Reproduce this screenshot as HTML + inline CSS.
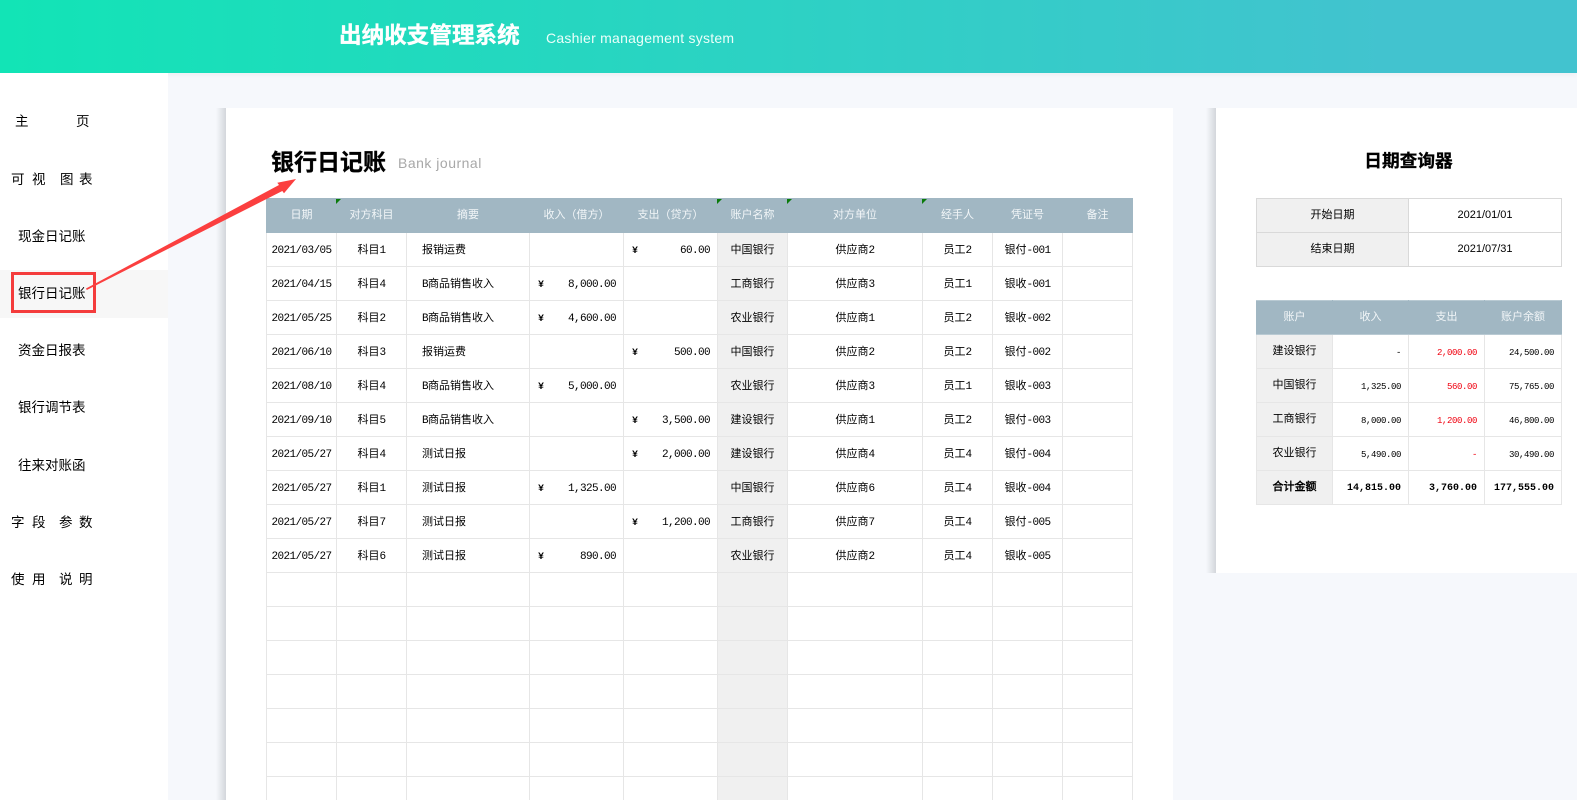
<!DOCTYPE html>
<html lang="zh"><head><meta charset="utf-8"><title>银行日记账</title>
<style>
*{box-sizing:border-box}
html,body{margin:0;padding:0;width:1577px;height:800px;overflow:hidden;background:#f6f8fc}
body{position:relative;font-family:"Liberation Sans","Noto Sans CJK SC",sans-serif;color:#000}
.abs{position:absolute}
#hd{left:0;top:0;width:1577px;height:73px;background:linear-gradient(90deg,#12e4b6 0%,#42c3cf 88%);box-shadow:0 2px 5px rgba(0,0,0,.04)}
#t1{left:339px;top:19px;font-size:22.6px;line-height:34px;font-weight:700;color:#fff;white-space:nowrap;-webkit-text-stroke:.35px #fff}
#t2{left:546px;top:27px;font-size:14px;line-height:22px;color:#eafffa;letter-spacing:.25px;white-space:nowrap}
#sb{left:0;top:73px;width:168px;height:727px;background:#fff}
#act{left:0;top:270px;width:168px;height:48px;background:#f7f7f7}
.m{position:absolute;font-family:"Liberation Sans","WenQuanYi Zen Hei",sans-serif;font-size:13.5px;line-height:18px;white-space:nowrap;color:#000;margin-top:1px}
#box{left:11px;top:272px;width:85px;height:41px;border:3px solid #f43c3c}
.card{background:#fff}
.sh{background:linear-gradient(90deg,#f6f8fc 0%,#e8ebef 40%,#d3d6db 100%)}
h1{position:absolute;margin:0;left:271px;top:144px;font-size:23px;line-height:32px;font-weight:700;white-space:nowrap;font-family:"Noto Sans CJK SC",sans-serif;-webkit-text-stroke:.35px #000}
#en{left:398px;top:153px;font-size:14px;line-height:20px;color:#a8a8a8;letter-spacing:.5px;white-space:nowrap}
table{border-collapse:collapse;table-layout:fixed;position:absolute}
td,th{padding:0;height:34px;line-height:14px;border:1px solid #e6e6e6;text-align:center;font-weight:400;font-size:11px;font-family:"Liberation Mono","WenQuanYi Zen Hei",monospace;white-space:nowrap;overflow:hidden}
th{background:#a1b7c3;color:#f2f6f8;border-color:#a1b7c3}
i{font-style:normal;font-size:11px;letter-spacing:-.6px}
#main td{padding-top:2px}
#main td.l{padding-left:15px}
#main td.d{font-size:11px;letter-spacing:-.6px;padding-top:3px}
.l{text-align:left}
.g{background:#f0f0f0}
#main td.a{font-size:11px;letter-spacing:-.6px;text-align:right;padding:3px 7px 0 8px;position:relative}
.a b{position:absolute;left:8px;top:12px;font-size:10px;font-weight:700;letter-spacing:0}
#main{left:266px;top:198px;width:866px}
.tri{position:absolute;top:199px;width:0;height:0;border-top:5px solid #0a7a0a;border-right:5px solid transparent}
#right h2{position:absolute;margin:0;left:1256px;width:305px;top:147px;text-align:center;font-size:17.7px;line-height:26px;font-weight:700;font-family:"Noto Sans CJK SC",sans-serif;-webkit-text-stroke:.3px #000}
#q{left:1256px;top:198px;width:305px}
#q td{border-color:#d9d9d9}
#q td.v{font-family:"Liberation Sans",sans-serif;font-size:11px;padding-bottom:1px}
#s{left:1256px;top:300px;width:305px}
#s th{border-color:#b9cad3;border-left-color:#a1b7c3;border-right-color:#a1b7c3}
#s th.x{border-left-color:#c3d1d9}
#s td.n{font-size:9px;letter-spacing:-.4px;text-align:right;padding:3px 7px 0 0}
#s td.r{color:#f0000f}
#s td.t{font-size:10px;font-weight:700;text-align:right;padding:3px 7px 0 0}
#s td.b{font-weight:700}
</style></head><body>
<div id="hd" class="abs"></div>
<div id="t1" class="abs">出纳收支管理系统</div>
<div id="t2" class="abs">Cashier management system</div>

<div id="sb" class="abs"></div>
<div id="act" class="abs"></div>
<span class="m" style="left:15px;top:112px">主</span><span class="m" style="left:76px;top:112px">页</span>
<span class="m" style="left:11px;top:170px">可</span><span class="m" style="left:32px;top:170px">视</span><span class="m" style="left:60px;top:170px">图</span><span class="m" style="left:79px;top:170px">表</span>
<span class="m" style="left:18px;top:227px">现金日记账</span>
<span class="m" style="left:18px;top:284px">银行日记账</span>
<span class="m" style="left:18px;top:341px">资金日报表</span>
<span class="m" style="left:18px;top:398px">银行调节表</span>
<span class="m" style="left:18px;top:456px">往来对账函</span>
<span class="m" style="left:11px;top:513px">字</span><span class="m" style="left:32px;top:513px">段</span><span class="m" style="left:59px;top:513px">参</span><span class="m" style="left:79px;top:513px">数</span>
<span class="m" style="left:11px;top:570px">使</span><span class="m" style="left:32px;top:570px">用</span><span class="m" style="left:59px;top:570px">说</span><span class="m" style="left:79px;top:570px">明</span>

<div class="abs sh" style="left:216px;top:108px;width:10px;height:692px"></div>
<div class="abs card" style="left:226px;top:108px;width:947px;height:692px"></div>
<h1>银行日记账</h1>
<div id="en" class="abs">Bank journal</div>

<table id="main">
<colgroup><col style="width:70px"><col style="width:70px"><col style="width:123px"><col style="width:94px"><col style="width:94px"><col style="width:70px"><col style="width:135px"><col style="width:70px"><col style="width:70px"><col style="width:70px"></colgroup>
<tr><th>日期</th><th>对方科目</th><th>摘要</th><th>收入（借方）</th><th>支出（贷方）</th><th>账户名称</th><th>对方单位</th><th>经手人</th><th>凭证号</th><th>备注</th></tr>
<tr><td class="d">2021/03/05</td><td>科目<i>1</i></td><td class="l">报销运费</td><td class="a"></td><td class="a"><b>¥</b>60.00</td><td class="g">中国银行</td><td>供应商<i>2</i></td><td>员工<i>2</i></td><td>银付<i>-001</i></td><td></td></tr>
<tr><td class="d">2021/04/15</td><td>科目<i>4</i></td><td class="l"><i>B</i>商品销售收入</td><td class="a"><b>¥</b>8,000.00</td><td class="a"></td><td class="g">工商银行</td><td>供应商<i>3</i></td><td>员工<i>1</i></td><td>银收<i>-001</i></td><td></td></tr>
<tr><td class="d">2021/05/25</td><td>科目<i>2</i></td><td class="l"><i>B</i>商品销售收入</td><td class="a"><b>¥</b>4,600.00</td><td class="a"></td><td class="g">农业银行</td><td>供应商<i>1</i></td><td>员工<i>2</i></td><td>银收<i>-002</i></td><td></td></tr>
<tr><td class="d">2021/06/10</td><td>科目<i>3</i></td><td class="l">报销运费</td><td class="a"></td><td class="a"><b>¥</b>500.00</td><td class="g">中国银行</td><td>供应商<i>2</i></td><td>员工<i>2</i></td><td>银付<i>-002</i></td><td></td></tr>
<tr><td class="d">2021/08/10</td><td>科目<i>4</i></td><td class="l"><i>B</i>商品销售收入</td><td class="a"><b>¥</b>5,000.00</td><td class="a"></td><td class="g">农业银行</td><td>供应商<i>3</i></td><td>员工<i>1</i></td><td>银收<i>-003</i></td><td></td></tr>
<tr><td class="d">2021/09/10</td><td>科目<i>5</i></td><td class="l"><i>B</i>商品销售收入</td><td class="a"></td><td class="a"><b>¥</b>3,500.00</td><td class="g">建设银行</td><td>供应商<i>1</i></td><td>员工<i>2</i></td><td>银付<i>-003</i></td><td></td></tr>
<tr><td class="d">2021/05/27</td><td>科目<i>4</i></td><td class="l">测试日报</td><td class="a"></td><td class="a"><b>¥</b>2,000.00</td><td class="g">建设银行</td><td>供应商<i>4</i></td><td>员工<i>4</i></td><td>银付<i>-004</i></td><td></td></tr>
<tr><td class="d">2021/05/27</td><td>科目<i>1</i></td><td class="l">测试日报</td><td class="a"><b>¥</b>1,325.00</td><td class="a"></td><td class="g">中国银行</td><td>供应商<i>6</i></td><td>员工<i>4</i></td><td>银收<i>-004</i></td><td></td></tr>
<tr><td class="d">2021/05/27</td><td>科目<i>7</i></td><td class="l">测试日报</td><td class="a"></td><td class="a"><b>¥</b>1,200.00</td><td class="g">工商银行</td><td>供应商<i>7</i></td><td>员工<i>4</i></td><td>银付<i>-005</i></td><td></td></tr>
<tr><td class="d">2021/05/27</td><td>科目<i>6</i></td><td class="l">测试日报</td><td class="a"><b>¥</b>890.00</td><td class="a"></td><td class="g">农业银行</td><td>供应商<i>2</i></td><td>员工<i>4</i></td><td>银收<i>-005</i></td><td></td></tr>
<tr><td></td><td></td><td></td><td></td><td></td><td class="g"></td><td></td><td></td><td></td><td></td></tr>
<tr><td></td><td></td><td></td><td></td><td></td><td class="g"></td><td></td><td></td><td></td><td></td></tr>
<tr><td></td><td></td><td></td><td></td><td></td><td class="g"></td><td></td><td></td><td></td><td></td></tr>
<tr><td></td><td></td><td></td><td></td><td></td><td class="g"></td><td></td><td></td><td></td><td></td></tr>
<tr><td></td><td></td><td></td><td></td><td></td><td class="g"></td><td></td><td></td><td></td><td></td></tr>
<tr><td></td><td></td><td></td><td></td><td></td><td class="g"></td><td></td><td></td><td></td><td></td></tr>
<tr><td></td><td></td><td></td><td></td><td></td><td class="g"></td><td></td><td></td><td></td><td></td></tr>
</table>
<div class="tri" style="left:336px"></div>
<div class="tri" style="left:717px"></div>
<div class="tri" style="left:787px"></div>
<div class="tri" style="left:922px"></div>

<div id="right">
<div class="abs sh" style="left:1206px;top:108px;width:10px;height:465px"></div>
<div class="abs card" style="left:1216px;top:108px;width:361px;height:465px"></div>
<h2>日期查询器</h2>
<table id="q"><colgroup><col style="width:152px"><col style="width:153px"></colgroup>
<tr><td class="g">开始日期</td><td class="v">2021/01/01</td></tr>
<tr><td class="g">结束日期</td><td class="v">2021/07/31</td></tr>
</table>
<table id="s"><colgroup><col style="width:76px"><col style="width:76px"><col style="width:76px"><col style="width:77px"></colgroup>
<tr><th>账户</th><th>收入</th><th>支出</th><th class="x">账户余额</th></tr>
<tr><td class="g">建设银行</td><td class="n">-</td><td class="n r">2,000.00</td><td class="n">24,500.00</td></tr>
<tr><td class="g">中国银行</td><td class="n">1,325.00</td><td class="n r">560.00</td><td class="n">75,765.00</td></tr>
<tr><td class="g">工商银行</td><td class="n">8,000.00</td><td class="n r">1,200.00</td><td class="n">46,800.00</td></tr>
<tr><td class="g">农业银行</td><td class="n">5,490.00</td><td class="n r">-</td><td class="n">30,490.00</td></tr>
<tr><td class="g b">合计金额</td><td class="t">14,815.00</td><td class="t">3,760.00</td><td class="t">177,555.00</td></tr>
</table>
</div>

<div id="box" class="abs"></div>
<svg class="abs" style="left:0;top:0" width="1577" height="800" viewBox="0 0 1577 800"><polygon points="86,288.5 86.8,290 282.3,191 284,193.3 296,179 277.3,182.7 279,185" fill="#fb3f3f"/></svg>
</body></html>
